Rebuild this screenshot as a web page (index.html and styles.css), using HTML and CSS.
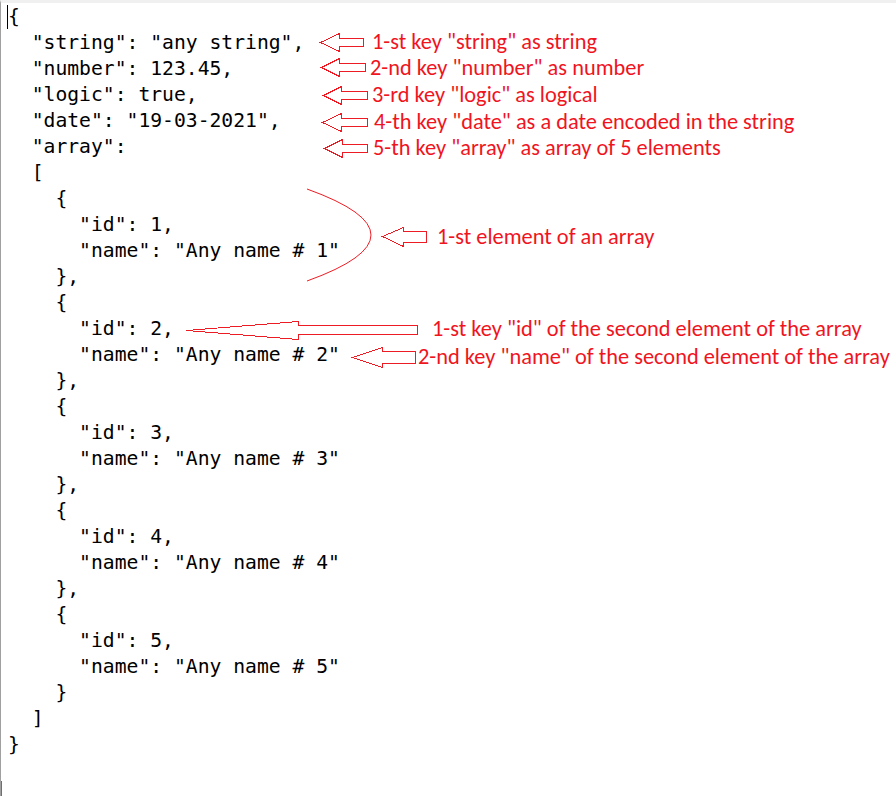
FILE: index.html
```html
<!DOCTYPE html>
<html>
<head>
<meta charset="utf-8">
<link rel="stylesheet" href="styles.css">
</head>
<body>
<div class="sheet">
<pre class="code"><span class="caret"></span>{
  "string": "any string",
  "number": 123.45,
  "logic": true,
  "date": "19-03-2021",
  "array":
  [
    {
      "id": 1,
      "name": "Any name # 1"
    },
    {
      "id": 2,
      "name": "Any name # 2"
    },
    {
      "id": 3,
      "name": "Any name # 3"
    },
    {
      "id": 4,
      "name": "Any name # 4"
    },
    {
      "id": 5,
      "name": "Any name # 5"
    }
  ]
}</pre>
<div class="notes">
  <svg class="marks" width="896" height="796" viewBox="0 0 896 796" shape-rendering="crispEdges">
    <g fill="none" stroke="#ed1c24" stroke-width="1">
      <polygon points="320.5,42.5 339.5,33.5 339.5,38.5 363.5,38.5 363.5,46.5 339.5,46.5 339.5,51.5"/>
      <polygon points="321.5,67.5 339.5,58.5 339.5,63.5 365.5,63.5 365.5,71.5 339.5,71.5 339.5,76.5"/>
      <polygon points="323.5,95.5 341.5,86.5 341.5,91.5 367.5,91.5 367.5,99.5 341.5,99.5 341.5,104.5"/>
      <polygon points="322.5,122.5 341.5,113.5 341.5,118.5 367.5,118.5 367.5,126.5 341.5,126.5 341.5,131.5"/>
      <polygon points="324.5,148.5 342.5,139.5 342.5,144.5 367.5,144.5 367.5,152.5 342.5,152.5 342.5,157.5"/>
      <polygon points="382.5,236.5 403.5,227.5 403.5,231.5 426.5,231.5 426.5,242.5 403.5,242.5 403.5,246.5"/>
      <polygon points="186.5,330.5 298.5,321.5 298.5,325.5 417.5,325.5 417.5,334.5 298.5,334.5 298.5,339.5"/>
      <polygon points="352.5,357.5 382.5,347.5 382.5,351.5 415.5,351.5 415.5,363.5 382.5,363.5 382.5,367.5"/>
      <path d="M307,189 Q435,235 307,281" shape-rendering="auto"/>
    </g>
  </svg>
  <div class="note n1">1-st key "string" as string</div>
  <div class="note n2">2-nd key "number" as number</div>
  <div class="note n3">3-rd key "logic" as logical</div>
  <div class="note n4">4-th key "date" as a date encoded in the string</div>
  <div class="note n5">5-th key "array" as array of 5 elements</div>
  <div class="note n6">1-st element of an array</div>
  <div class="note n7">1-st key "id" of the second element of the array</div>
  <div class="note n8">2-nd key "name" of the second element of the array</div>
</div>
<div class="stain"></div>
</div>
</body>
</html>
```
FILE: styles.css
```css
html, body {
  margin: 0;
  padding: 0;
  background: #ffffff;
}

.sheet {
  position: relative;
  width: 896px;
  height: 796px;
  overflow: hidden;
  box-sizing: border-box;
  border-top: 3px solid #f0f0f0;
  border-left: 1px solid #a0a0a0;
  background: #ffffff;
}

.code {
  position: relative;
  margin: 0;
  padding: 1px 0 0 7px;
  font-family: "DejaVu Sans Mono", "Liberation Mono", monospace;
  font-size: 19.7px;
  line-height: 26px;
  color: #000000;
}

.caret {
  position: absolute;
  left: 6px;
  top: 2px;
  width: 1px;
  height: 24px;
  background: #000000;
}

.notes {
  position: absolute;
  left: -1px;
  top: -3px;
  width: 896px;
  height: 796px;
}

.marks {
  position: absolute;
  left: 0;
  top: 0;
}

.note {
  position: absolute;
  white-space: nowrap;
  font-family: Carlito, "Lato", sans-serif;
  font-size: 22.4px;
  line-height: 26px;
  color: #f0141e;
}

.n1 { left: 372px; top: 29px; }
.n2 { left: 370px; top: 55px; }
.n3 { left: 372px; top: 82px; }
.n4 { left: 374px; top: 109px; }
.n5 { left: 373px; top: 135px; }
.n6 { left: 437px; top: 224px; }
.n7 { left: 432px; top: 316px; }
.n8 { left: 418px; top: 344px; }

.stain {
  position: absolute;
  left: -1px;
  top: 778px;
  width: 2px;
  height: 18px;
  background: #8a6a40;
}
```
